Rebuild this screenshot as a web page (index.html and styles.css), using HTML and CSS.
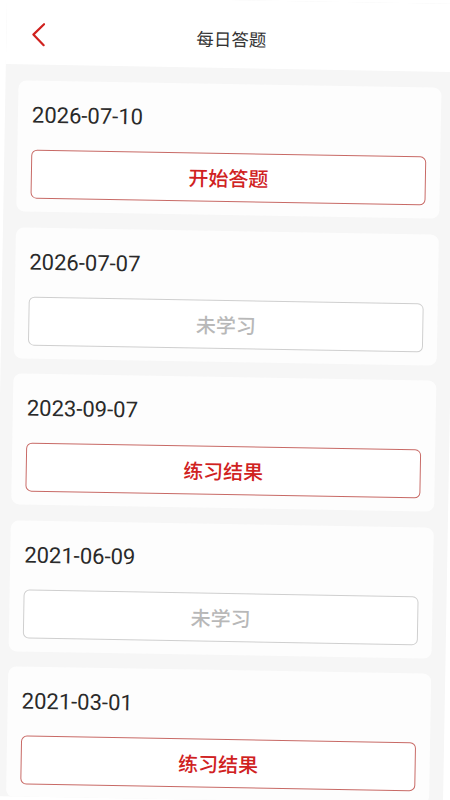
FILE: index.html
```html
<!DOCTYPE html>
<html lang="zh-CN">
<head>
<meta charset="utf-8">
<title>每日答题</title>
<link rel="stylesheet" href="styles.css">
</head>
<body>
<div class="screen">
  <header class="topbar">
    <div class="back">
      <svg width="14" height="24" viewBox="0 0 14 24" fill="none"><polyline points="12.5,1.5 2,12 12.5,22.5" stroke="#d0221f" stroke-width="2.2" stroke-linecap="round" stroke-linejoin="round"/></svg>
    </div>
    <div class="title">每日答题</div>
    <div class="spacer"></div>
  </header>
  <main class="list">
    <section class="card">
      <div class="date">2026-07-10</div>
      <div class="btn btn-red">开始答题</div>
    </section>
    <section class="card">
      <div class="date">2026-07-07</div>
      <div class="btn btn-gray">未学习</div>
    </section>
    <section class="card">
      <div class="date">2023-09-07</div>
      <div class="btn btn-red">练习结果</div>
    </section>
    <section class="card">
      <div class="date">2021-06-09</div>
      <div class="btn btn-gray">未学习</div>
    </section>
    <section class="card">
      <div class="date">2021-03-01</div>
      <div class="btn btn-red">练习结果</div>
    </section>
  </main>
</div>
</body>
</html>
```
FILE: styles.css
```css
html, body {
  margin: 0;
  padding: 0;
  background: #ffffff;
  overflow: hidden;
}
body {
  width: 450px;
  height: 800px;
  font-family: Roboto, "Noto Sans CJK SC", sans-serif;
}
.screen {
  width: 450px;
  height: 800px;
  display: flex;
  flex-direction: column;
  background: #f6f6f6;
  overflow: hidden;
  transform: rotate(1deg);
  transform-origin: 225px 400px;
}
.topbar {
  height: 60px;
  padding-top: 8px;
  background: #ffffff;
  display: grid;
  grid-template-columns: 1fr auto 1fr;
  align-items: center;
  flex-shrink: 0;
}
.back {
  padding-left: 25px;
  display: flex;
  align-items: center;
}
.back svg {
  display: block;
}
.title {
  font-family: "Noto Sans CJK SC", sans-serif;
  font-size: 17.5px;
  color: #333333;
}
.list {
  padding: 16px 14px 0 13px;
  display: flex;
  flex-direction: column;
  gap: 15.5px;
}
.card {
  background: #fdfdfd;
  border-radius: 8px;
  padding: 20px 14px 13px 14px;
  display: flex;
  flex-direction: column;
}
.date {
  font-family: Roboto, sans-serif;
  font-size: 22px;
  line-height: 30px;
  color: #2a2a2a;
  margin-bottom: 19px;
}
.btn {
  height: 47px;
  border-radius: 6px;
  display: flex;
  align-items: center;
  justify-content: center;
  font-family: "Noto Sans CJK SC", sans-serif;
  font-size: 20px;
  font-weight: 500;
  background: #ffffff;
}
.btn-red {
  border: 1px solid #c86a66;
  color: #d0221f;
}
.btn-gray {
  border: 1px solid #cfcfcf;
  color: #b8b8b8;
}
```
